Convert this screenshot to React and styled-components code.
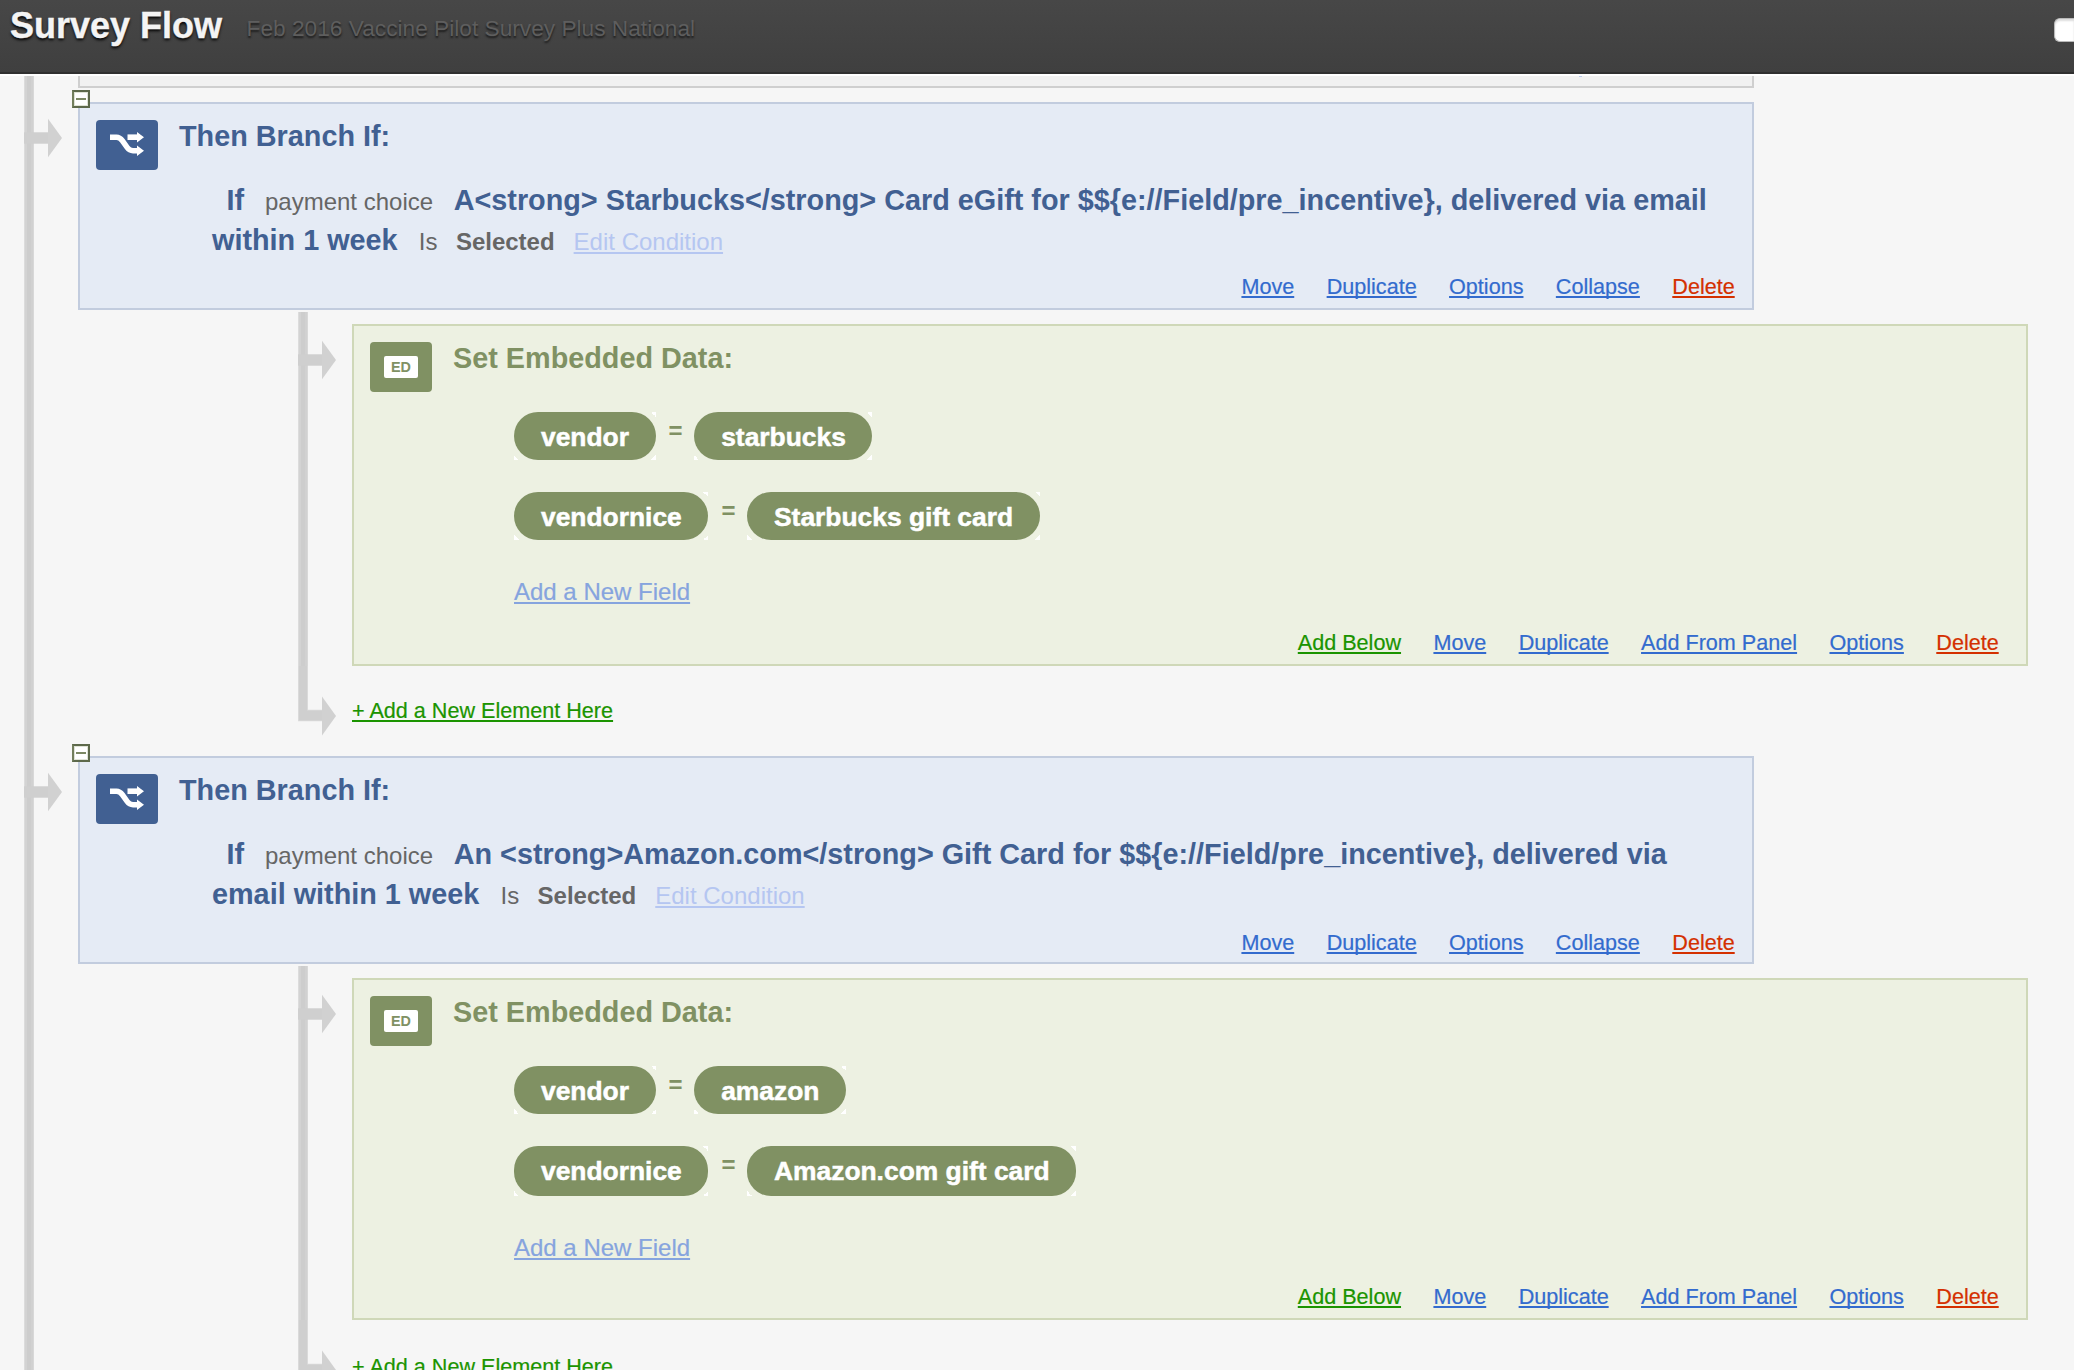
import React from 'react';
import styled, { createGlobalStyle, css } from 'styled-components';

const palette = {
  blue: { bg: '#e5ebf5', border: '#c2ccde', ink: '#416092' },
  green: { bg: '#edf1e2', border: '#cfd8b8', ink: '#809163' },
};

const linkColors = {
  default: '#336bce',
  add: '#1b9400',
  danger: '#d43000',
};

const GlobalStyle = createGlobalStyle`
  * { box-sizing: border-box; }
  body {
    margin: 0;
    background: #f6f6f6;
    font-family: 'Liberation Sans', Arial, Helvetica, sans-serif;
    color: #666;
  }
`;

const Page = styled.div`
  display: flex;
  flex-direction: column;
  height: 1370px;
  overflow: hidden;
`;

const Header = styled.header`
  flex: none;
  display: flex;
  align-items: flex-start;
  height: 76px;
  padding-left: 10px;
  background: linear-gradient(#474747, #3f3f3f);
  border-bottom: 2px solid #fff;
  box-shadow: inset 0 -2px 0 #303030;
  white-space: nowrap;
`;

const HeaderTitle = styled.h1`
  margin: 6px 0 0;
  font-size: 36px;
  line-height: 40px;
  color: #f4f4f4;
  text-shadow: 0 2px 3px #000;
  -webkit-text-stroke: 0.4px #f4f4f4;
`;

const SurveyName = styled.span`
  margin: 13px 0 0 24.5px;
  font-size: 22.7px;
  line-height: 30px;
  color: #5e5e5e;
  text-shadow: 0 2px 2px #1c1c1c;
`;

const HeaderField = styled.div`
  width: 20px;
  height: 24px;
  margin: 18px 0 0 auto;
  border: 1px solid #b9b9b9;
  border-right: 0;
  border-radius: 6px 0 0 6px;
  background: #fff;
  box-shadow: inset 0 2px 2px #ddd;
`;

const Canvas = styled.main`
  flex: 1;
  min-height: 0;
  overflow: hidden;
`;

const NodeRow = styled.div`
  display: grid;
  grid-template-columns: 78px 1fr;
`;

const trunk = css`
  background: linear-gradient(
      to right,
      #dcdcdc 0 1px,
      #d3d3d3 1px 3px,
      #cdcdcd 3px 7px,
      #d1d1d1 7px 9px,
      #d8d8d8 9px
    )
    24px 0 / 10px 100% no-repeat;
`;

const Rail = styled.div`
  padding-top: ${(p) => p.$arrowTop ?? 0}px;
  ${(p) => !p.$last && trunk}
  svg {
    display: block;
  }
`;

const NodeContent = styled.div`
  padding-top: ${(p) => p.$gap ?? 0}px;
`;

const ChildList = styled.div`
  margin: 2px 0 0 196px;
`;

const PreviousBlock = styled.div`
  width: 1676px;
  height: 12px;
  background: #f1f1f1;
  border: 2px solid #cfcfcf;
  border-top: 0;
`;

const Descender = styled.div`
  width: 3px;
  height: 1px;
  margin-left: 1499px;
  background: #b9c9ec;
`;

const Block = styled.section`
  position: relative;
  display: flex;
  flex-direction: column;
  width: 1676px;
  height: ${(p) => p.$height}px;
  padding: 14px 0 0 16px;
  color: ${(p) => palette[p.$tone].ink};
  background: ${(p) => palette[p.$tone].bg};
  border: 2px solid ${(p) => palette[p.$tone].border};
`;

const Toggle = styled.div`
  position: absolute;
  top: -14px;
  left: -8px;
  display: flex;
  align-items: center;
  justify-content: center;
  width: 18px;
  height: 18px;
  background: #fff;
  border: 2px solid #5d694b;
  border-left-color: #727e5c;
  box-shadow: inset 0 0 0 1px #dfe3d6;
  &::after {
    content: '';
    width: 10px;
    height: 2px;
    background: #7c8864;
  }
`;

const BlockHead = styled.div`
  display: flex;
  gap: 21px;
  height: 52px;
`;

const BlockIcon = styled.div`
  display: flex;
  align-items: center;
  justify-content: center;
  width: 62px;
  height: 50px;
  margin-top: 2px;
  border-radius: 4px;
  background: ${(p) => palette[p.$tone].ink};
`;

const EdBadge = styled.span`
  width: 34px;
  height: 22px;
  border-radius: 2px;
  background: #fff;
  color: #809163;
  font-size: 14.4px;
  font-weight: bold;
  line-height: 23px;
  text-align: center;
`;

const BlockTitle = styled.h2`
  margin: 0;
  font-size: 28.8px;
  line-height: 36px;
`;

const Condition = styled.p`
  width: 1516px;
  height: 80px;
  margin: 10px 0 0 116px;
  font-size: 28.8px;
  line-height: 40px;
  font-weight: bold;
`;

const Conjunction = styled.span`
  margin: 0 21px 0 14.4px;
`;

const Answer = styled.span`
  margin: 0 21.2px 0 20.6px;
`;

const Small = styled.span`
  font-size: 24px;
  line-height: 1;
  font-weight: ${(p) => (p.$strong ? 'bold' : 'normal')};
  color: #666;
  margin-left: ${(p) => (p.$strong ? 18.4 : 0)}px;
`;

const underline = css`
  text-decoration: underline;
  text-decoration-thickness: 2px;
  text-underline-offset: 2px;
  text-decoration-skip-ink: none;
`;

const EditCondition = styled.a`
  ${underline}
  margin-left: 19px;
  font-size: 24px;
  line-height: 1;
  font-weight: normal;
  color: #b5c6f1;
`;

const Actions = styled.nav`
  display: flex;
  justify-content: flex-end;
  gap: 32.4px;
  margin-top: auto;
  padding: 0 ${(p) => p.$right}px ${(p) => p.$bottom}px 0;
`;

const ActionLink = styled.a`
  ${underline}
  font-size: 21.6px;
  line-height: 24px;
  color: ${(p) => linkColors[p.$kind ?? 'default']};
  -webkit-text-stroke: 0.2px currentColor;
`;

const Fields = styled.div`
  display: flex;
  flex-direction: column;
  align-items: flex-start;
  gap: 32px;
  margin: 20px 0 0 144px;
`;

const FieldRow = styled.div`
  display: flex;
  align-items: flex-start;
`;

const corner = (dir) => `linear-gradient(${dir}, transparent 50%, #fff 50%)`;

const PillFrame = styled.div`
  background:
    ${corner('to top right')} top right / 5px 5px no-repeat,
    ${corner('to bottom right')} bottom right / 5px 5px no-repeat,
    ${corner('to bottom left')} bottom left / 5px 5px no-repeat;
`;

const Pill = styled.div`
  height: ${(p) => p.$height}px;
  padding: 1px 26.6px 0 27px;
  border-radius: 24px;
  background: #809163;
  color: #fff;
  font-size: 26.4px;
  font-weight: bold;
  line-height: 48px;
  white-space: nowrap;
  -webkit-text-stroke: 0.5px #fff;
`;

const Equals = styled.span`
  width: 38.6px;
  padding-left: 13px;
  font-size: 24px;
  font-weight: bold;
  line-height: 38px;
`;

const AddField = styled.a`
  ${underline}
  margin-top: 6px;
  font-size: 24px;
  line-height: 28px;
  color: #86a4de;
  -webkit-text-stroke: 0.2px currentColor;
`;

const AddElementRow = styled.div`
  height: 76px;
  padding-top: ${(p) => p.$top}px;
`;

const BranchGlyph = () => (
  <svg width="62" height="50" viewBox="0 0 62 50" fill="none">
    <path d="M14 17.2H20.5C23.5 17.2 24.6 18.3 26.3 20.6L31.2 27.5C33 30 34.5 30.7 37 30.7H42" stroke="#fff" strokeWidth="5.6" />
    <path d="M31.5 17.2H42" stroke="#fff" strokeWidth="5.6" />
    <path d="M41 12L48 17.2L41 22.4ZM41 25.5L48 30.7L41 35.9Z" fill="#fff" />
  </svg>
);

const TeeArrow = () => (
  <svg width="78" height="40" viewBox="0 0 78 40">
    <path d="M24 14.3H48V25.7H24Z" fill="#cfcfcf" />
    <path d="M48 .8L62 20L48 39.2Z" fill="#d1d1d1" />
  </svg>
);

const ElbowArrow = () => (
  <svg width="78" height="76" viewBox="0 0 78 76">
    <path d="M24 0H34V43.8H48V55.3H24Z" fill="#dadada" />
    <path d="M25 0H33V44.5H48V54.5H25Z" fill="#cfcfcf" />
    <path d="M48 30.5L62 50L48 69.5Z" fill="#d1d1d1" />
  </svg>
);

const Field = ({ name, value, height }) => (
  <FieldRow>
    <PillFrame><Pill $height={height}>{name}</Pill></PillFrame>
    <Equals>=</Equals>
    <PillFrame><Pill $height={height}>{value}</Pill></PillFrame>
  </FieldRow>
);

const EmbeddedData = ({ fields }) => (
  <Block $tone="green" $height={342}>
    <BlockHead>
      <BlockIcon $tone="green"><EdBadge>ED</EdBadge></BlockIcon>
      <BlockTitle>Set Embedded Data:</BlockTitle>
    </BlockHead>
    <Fields>
      {fields.map((f) => <Field key={f.name} {...f} />)}
      <AddField>Add a New Field</AddField>
    </Fields>
    <Actions $right={27.3} $bottom={9}>
      <ActionLink $kind="add">Add Below</ActionLink>
      <ActionLink>Move</ActionLink>
      <ActionLink>Duplicate</ActionLink>
      <ActionLink>Add From Panel</ActionLink>
      <ActionLink>Options</ActionLink>
      <ActionLink $kind="danger">Delete</ActionLink>
    </Actions>
  </Block>
);

const Branch = ({ answer, fields, actionsBottom, addTop }) => (
  <NodeRow>
    <Rail $arrowTop={30}><TeeArrow /></Rail>
    <NodeContent $gap={14}>
      <Block $tone="blue" $height={208}>
        <Toggle />
        <BlockHead>
          <BlockIcon $tone="blue"><BranchGlyph /></BlockIcon>
          <BlockTitle>Then Branch If:</BlockTitle>
        </BlockHead>
        <Condition>
          <Conjunction>If</Conjunction>
          <Small>payment choice</Small>
          <Answer>{answer}</Answer>
          <Small>Is</Small>
          <Small $strong>Selected</Small>
          <EditCondition>Edit Condition</EditCondition>
        </Condition>
        <Actions $right={17.3} $bottom={actionsBottom}>
          <ActionLink>Move</ActionLink>
          <ActionLink>Duplicate</ActionLink>
          <ActionLink>Options</ActionLink>
          <ActionLink>Collapse</ActionLink>
          <ActionLink $kind="danger">Delete</ActionLink>
        </Actions>
      </Block>
      <ChildList>
        <NodeRow>
          <Rail $arrowTop={28}><TeeArrow /></Rail>
          <NodeContent $gap={12}><EmbeddedData fields={fields} /></NodeContent>
        </NodeRow>
        <NodeRow>
          <Rail $last><ElbowArrow /></Rail>
          <AddElementRow $top={addTop}>
            <ActionLink $kind="add">+ Add a New Element Here</ActionLink>
          </AddElementRow>
        </NodeRow>
      </ChildList>
    </NodeContent>
  </NodeRow>
);

export default function App() {
  return (
    <Page>
      <GlobalStyle />
      <Header>
        <HeaderTitle>Survey Flow</HeaderTitle>
        <SurveyName>Feb 2016 Vaccine Pilot Survey Plus National</SurveyName>
        <HeaderField />
      </Header>
      <Canvas>
        <NodeRow>
          <Rail />
          <PreviousBlock><Descender /></PreviousBlock>
        </NodeRow>
        <Branch
          answer="A<strong> Starbucks</strong> Card eGift for $${e://Field/pre_incentive}, delivered via email within 1 week"
          fields={[
            { name: 'vendor', value: 'starbucks', height: 48 },
            { name: 'vendornice', value: 'Starbucks gift card', height: 48 },
          ]}
          actionsBottom={9}
          addTop={33}
        />
        <Branch
          answer="An <strong>Amazon.com</strong> Gift Card for $${e://Field/pre_incentive}, delivered via email within 1 week"
          fields={[
            { name: 'vendor', value: 'amazon', height: 48 },
            { name: 'vendornice', value: 'Amazon.com gift card', height: 50 },
          ]}
          actionsBottom={7}
          addTop={35}
        />
      </Canvas>
    </Page>
  );
}
